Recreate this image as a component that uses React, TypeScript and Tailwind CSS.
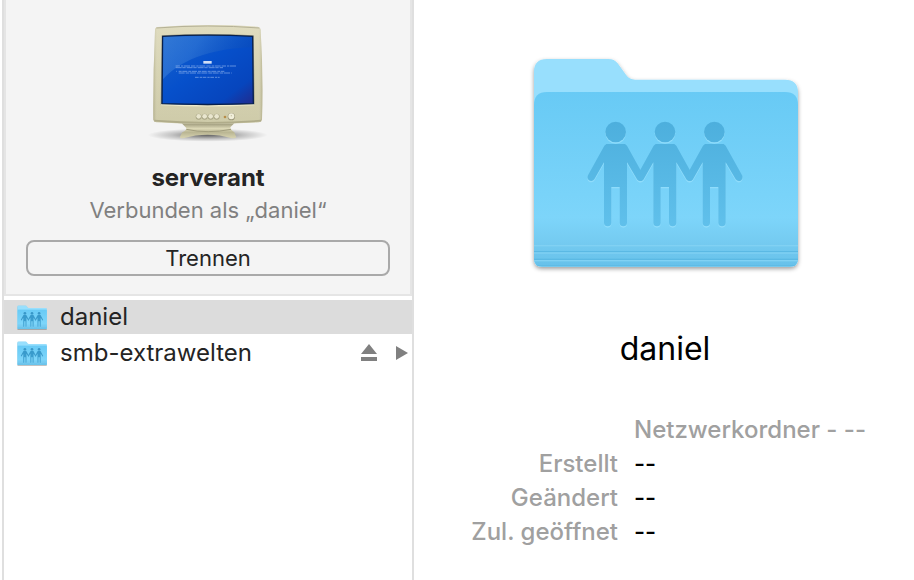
import { useState } from 'react';

const shares = [
  { name: 'daniel', mounted: false },
  { name: 'smb-extrawelten', mounted: true },
];

const details = [
  { label: 'Erstellt', value: '--' },
  { label: 'Geändert', value: '--' },
  { label: 'Zul. geöffnet', value: '--' },
];

const Person = ({ x }: { x: number }) => (
  <g transform={`translate(${x} 0)`}>
    <circle cx="302" cy="261" r="31" />
    <path d="M274 297H330L336 302L386 392Q388 402 381 407Q372 411 366 403L336 352V534Q335 544 325 544Q315 544 314 534V426H289V534Q288 544 278 544Q268 544 267 534V352L238 403Q231 411 222 406Q215 400 219 391L268 302Z" />
  </g>
);

const People = () => (
  <>
    <Person x={0} />
    <Person x={148} />
    <Person x={296} />
  </>
);

interface SharedFolderProps {
  id: string;
  className: string;
  small?: boolean;
}

// the small variant has a bigger, darker figure group so it stays readable in the list
const SharedFolder = ({ id, className, small = false }: SharedFolderProps) => (
  <svg viewBox="0 0 900 720" className={className} aria-hidden="true">
    <defs>
      <linearGradient id={`${id}-front`} x1="0" y1="0" x2="0" y2="1">
        <stop offset="0" stopColor="#68caf5" />
        <stop offset="0.72" stopColor="#7dd5fa" />
        <stop offset="0.87" stopColor="#74caf0" />
        <stop offset="1" stopColor="#66c1ea" />
      </linearGradient>
      <linearGradient id={`${id}-person`} gradientUnits="userSpaceOnUse" x1="0" y1="230" x2="0" y2="544">
        <stop offset="0" stopColor={small ? '#3596c8' : '#4dafdd'} />
        <stop offset="1" stopColor={small ? '#3fa3d4' : '#60c0eb'} />
      </linearGradient>
      <filter id={`${id}-shadow`} x="-5%" y="-5%" width="110%" height="115%">
        <feDropShadow dx="0" dy={small ? 16 : 6} stdDeviation={small ? 10 : 6} floodColor="#000" floodOpacity="0.4" />
      </filter>
      <clipPath id={`${id}-clip`}>
        <path d="M57 180Q57 141 96 141H810Q849 141 849 180V641Q849 665 825 665H81Q57 665 57 641Z" />
      </clipPath>
    </defs>
    <path
      d="M57 80Q57 42 96 42H280Q298 42 308 55L334 91Q344 104 360 104H810Q849 104 849 143V641Q849 665 825 665H81Q57 665 57 641Z"
      fill="#98dffd"
      filter={`url(#${id}-shadow)`}
    />
    <g clipPath={`url(#${id}-clip)`}>
      <rect x="57" y="141" width="792" height="524" fill={`url(#${id}-front)`} />
      <g fill="#5bb9e4">
        <rect x="57" y="618" width="792" height="4" />
        <rect x="57" y="641" width="792" height="4" />
        <rect x="57" y="661" width="792" height="4" />
      </g>
      <g fill="#81d1f3">
        <rect x="57" y="600" width="792" height="4" />
        <rect x="57" y="622" width="792" height="4" />
        <rect x="57" y="645" width="792" height="4" />
      </g>
    </g>
    <g transform={small ? 'translate(-126 -84) scale(1.28)' : undefined}>
      <g fill="#8fdcfb" transform="translate(0 4)">
        <People />
      </g>
      <g fill={`url(#${id}-person)`}>
        <People />
      </g>
    </g>
  </svg>
);

const Monitor = () => (
  <svg viewBox="-5 0 420 420" className="size-[140px]" aria-hidden="true">
    <defs>
      <linearGradient id="case" x1="0" y1="0" x2="0" y2="1">
        <stop offset="0" stopColor="#dcd8b8" />
        <stop offset="0.5" stopColor="#d2ceaa" />
        <stop offset="1" stopColor="#c9c5a0" />
      </linearGradient>
      <linearGradient id="edge" x1="0" y1="0" x2="1" y2="0">
        <stop offset="0" stopColor="#8d8966" stopOpacity="0.4" />
        <stop offset="0.04" stopColor="#fff" stopOpacity="0.1" />
        <stop offset="0.96" stopColor="#fff" stopOpacity="0.1" />
        <stop offset="1" stopColor="#8d8966" stopOpacity="0.4" />
      </linearGradient>
      <linearGradient id="screen" x1="0" y1="0" x2="1" y2="1">
        <stop offset="0" stopColor="#1763cc" />
        <stop offset="0.45" stopColor="#0650cb" />
        <stop offset="0.8" stopColor="#0645bd" />
        <stop offset="1" stopColor="#222a8c" />
      </linearGradient>
      <linearGradient id="glare" x1="0" y1="0" x2="1" y2="0.3">
        <stop offset="0" stopColor="#4d8fe0" stopOpacity="0.5" />
        <stop offset="0.4" stopColor="#3a7ed8" stopOpacity="0.5" />
        <stop offset="1" stopColor="#0a48ae" stopOpacity="0.3" />
      </linearGradient>
      <linearGradient id="stand" x1="0" y1="0" x2="0" y2="1">
        <stop offset="0" stopColor="#9c987a" />
        <stop offset="0.35" stopColor="#dcd8b6" />
        <stop offset="0.6" stopColor="#b9b592" />
        <stop offset="1" stopColor="#d8d4b2" />
      </linearGradient>
      <radialGradient id="floor">
        <stop offset="0" stopColor="#000" stopOpacity="0.6" />
        <stop offset="0.6" stopColor="#000" stopOpacity="0.2" />
        <stop offset="1" stopColor="#000" stopOpacity="0" />
      </radialGradient>
    </defs>
    <ellipse cx="204" cy="375" rx="180" ry="20" fill="url(#floor)" />
    <path d="M126 340H284L272 352Q272 360 284 367L290 382Q286 386 274 384Q242 374 204 374Q166 374 134 384Q122 386 120 382L128 367Q142 360 140 354Z" fill="url(#stand)" />
    <path d="M140 358Q204 372 274 358" fill="none" stroke="#a19d7d" strokeWidth="3" />
    <path d="M46 60Q46 52 54 51Q204 40 354 50Q363 52 363 60Q371 195 367 329Q366 336 358 337Q204 346 50 337Q42 336 41 329Q40 195 46 60Z" fill="url(#case)" />
    <path d="M46 60Q46 52 54 51Q204 40 354 50Q363 52 363 60Q371 195 367 329Q366 336 358 337Q204 346 50 337Q42 336 41 329Q40 195 46 60Z" fill="url(#edge)" />
    <path d="M50 54Q204 42 359 54" fill="none" stroke="#b5b196" strokeWidth="3" />
    <path d="M44 332Q204 345 364 332" fill="none" stroke="#b0ac8a" strokeWidth="5" />
    <path d="M66 76Q204 68 342 76L345 284Q204 292 63 284Z" fill="#9b997e" />
    <path d="M64 284Q204 291 344 284" fill="none" stroke="#eeeacb" strokeWidth="4" />
    <path d="M69 79Q204 72 339 79L341 281Q204 286 67 281Z" fill="url(#screen)" stroke="#07204e" strokeWidth="4" />
    <path d="M71 81Q204 75 337 81V112C240 114 130 140 70 208Z" fill="url(#glare)" />
    <g stroke="#a9c7f5" strokeWidth="3" opacity="0.55">
      <path d="M108 168H290" strokeDasharray="13 3 7 2 18 3" />
      <path d="M108 173H250" strokeDasharray="18 2 10 3" />
      <path d="M109 184H111M117 184H254" strokeDasharray="9 2 15 3" />
      <path d="M117 189H276" strokeDasharray="18 3 11 2" />
      <path d="M166 202H240" strokeDasharray="11 3 7 2" />
    </g>
    <rect x="191" y="153" width="25" height="8" fill="#d0def5" />
    {[177, 195, 213, 231].map((x) => (
      <g key={x}>
        <circle cx={x} cy="320" r="9" fill="#a8a585" />
        <circle cx={x} cy="319" r="7" fill="#e9e6ce" />
      </g>
    ))}
    <circle cx="256" cy="321" r="4" fill="#b78d49" />
    <circle cx="275" cy="320" r="11" fill="#9c987a" />
    <circle cx="275" cy="319" r="9" fill="#f1efda" />
    <path d="M275 315V319" stroke="#aaa685" strokeWidth="2" />
  </svg>
);

const App = () => {
  const [selected, setSelected] = useState('daniel');

  return (
    <div className="flex min-h-screen bg-white pl-[2px] font-['Inter',sans-serif] text-[#242424]">
      <aside className="flex w-[412px] shrink-0 flex-col border-x-2 border-[#dfdfdf]">
        <header className="flex flex-col items-center border-x-2 border-b-2 border-[#e5e5e5] bg-[#f4f4f4] px-5 pt-[10px] pb-[18px]">
          <Monitor />
          <h1 className="mt-3 text-2xl leading-8 font-bold">serverant</h1>
          <p className="text-[22px] leading-8 text-[#808080]">Verbunden als „daniel“</p>
          <button className="mt-[14px] h-9 w-full rounded-lg border-2 border-[#a9a9a9] text-[22px] leading-8">
            Trennen
          </button>
        </header>

        <ul className="mt-1 flex flex-col gap-[2px]">
          {shares.map((share) => (
            <li
              key={share.name}
              className={`flex h-[34px] items-center pl-[11px] ${selected === share.name ? 'bg-[#dcdcdc]' : ''}`}
            >
              <button
                className="flex flex-1 items-center gap-[11px] text-left text-2xl leading-[34px]"
                onClick={() => setSelected(share.name)}
              >
                <SharedFolder id={`row-${share.name}`} className="h-[27px] w-[34px]" small />
                {share.name}
              </button>
              {share.mounted && (
                <div className="flex items-center gap-[18px] pr-1 text-[#808080]">
                  <button aria-label="Auswerfen">
                    <svg viewBox="0 0 16 18" className="h-[18px] w-4 fill-current">
                      <path d="M8 0L16 10H0ZM0 13H16V17H0Z" />
                    </svg>
                  </button>
                  <svg viewBox="0 0 13 14" className="h-[14px] w-[13px] fill-current" aria-hidden="true">
                    <path d="M1 0L13 7L1 14Z" />
                  </svg>
                </div>
              )}
            </li>
          ))}
        </ul>
      </aside>

      <main className="flex min-w-0 flex-1 flex-col pt-[45px] pl-[2px]">
        <SharedFolder id="preview" className="h-[240px] w-[300px] self-center" />
        <h2 className="mt-10 text-center text-[32px] leading-[48px] text-black">{selected}</h2>
        <dl className="mt-10 grid grid-cols-[202px_1fr] gap-x-4 text-2xl leading-[34px] font-medium">
          <dt />
          <dd className="text-[#a0a0a0]">Netzwerkordner - --</dd>
          {details.map((item) => (
            <div key={item.label} className="contents">
              <dt className="text-right text-[#a0a0a0]">{item.label}</dt>
              <dd className="text-black">{item.value}</dd>
            </div>
          ))}
        </dl>
      </main>
    </div>
  );
};

export default App;
